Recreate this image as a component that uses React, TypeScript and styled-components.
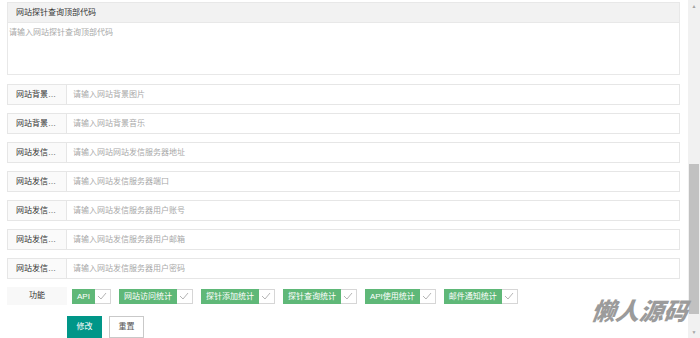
import React from 'react';
import styled, { createGlobalStyle } from 'styled-components';

const GlobalStyle = createGlobalStyle`
  html, body {
    margin: 0;
    padding: 0;
    background: #fff;
  }
  body {
    font-family: "Liberation Sans", "Noto Sans CJK SC", sans-serif;
    font-size: 8px;
    color: #333;
  }
`;

const fields = [
  { label: '网站背景图片', placeholder: '请输入网站背景图片' },
  { label: '网站背景音乐', placeholder: '请输入网站背景音乐' },
  { label: '网站发信服务器地址', placeholder: '请输入网站网站发信服务器地址' },
  { label: '网站发信服务器端口', placeholder: '请输入网站发信服务器端口' },
  { label: '网站发信服务器用户账号', placeholder: '请输入网站发信服务器用户账号' },
  { label: '网站发信服务器用户邮箱', placeholder: '请输入网站发信服务器用户邮箱' },
  { label: '网站发信服务器用户密码', placeholder: '请输入网站发信服务器用户密码' },
];

const features = ['API', '网站访问统计', '探针添加统计', '探针查询统计', 'API使用统计', '邮件通知统计'];

export default function App() {
  return (
    <>
      <GlobalStyle />
      <Page>
        <Main>
          <Card>
            <CardHeader>网站探针查询顶部代码</CardHeader>
            <CardBody>
              <Placeholder>请输入网站探针查询顶部代码</Placeholder>
            </CardBody>
          </Card>

          <FieldList>
            {fields.map((f, i) => (
              <FieldRow key={i}>
                <FieldLabel>{f.label}</FieldLabel>
                <FieldInput>{f.placeholder}</FieldInput>
              </FieldRow>
            ))}

            <FeatureRow>
              <FeatureLabel>功能</FeatureLabel>
              <Checks>
                {features.map((name) => (
                  <CheckItem key={name}>
                    <CheckText>{name}</CheckText>
                    <CheckBox>
                      <svg width="10" height="8" viewBox="0 0 10 8">
                        <polyline points="1,4 4,7 9,1" fill="none" stroke="#b5b5b5" strokeWidth="1" />
                      </svg>
                    </CheckBox>
                  </CheckItem>
                ))}
              </Checks>
            </FeatureRow>
          </FieldList>

          <Actions>
            <Button $primary>修改</Button>
            <Button>重置</Button>
          </Actions>
        </Main>

        <ScrollTrack>
          <ArrowUp>▲</ArrowUp>
          <ScrollSpace>
            <ScrollThumb />
          </ScrollSpace>
          <ArrowDown>▼</ArrowDown>
        </ScrollTrack>

        <Watermark>懒人源码</Watermark>
      </Page>
    </>
  );
}

const Page = styled.div`
  position: relative;
  display: flex;
  width: 700px;
  height: 338px;
  overflow: hidden;
`;

const Main = styled.div`
  width: 673px;
  margin-left: 7px;
  padding-top: 2px;
  display: flex;
  flex-direction: column;
`;

const Card = styled.div`
  border: 1px solid #e8e8e8;
  height: 72px;
  display: flex;
  flex-direction: column;
`;

const CardHeader = styled.div`
  height: 19px;
  line-height: 19px;
  padding-left: 8px;
  background: #f2f2f2;
  border-bottom: 1px solid #e8e8e8;
  color: #333;
`;

const CardBody = styled.div`
  flex: 1;
  padding: 3px 0 0 1px;
`;

const Placeholder = styled.span`
  color: #a8a8a8;
`;

const FieldList = styled.div`
  margin-top: 9px;
  display: flex;
  flex-direction: column;
  gap: 8px;
`;

const FieldRow = styled.div`
  display: flex;
  height: 21px;
`;

const FieldLabel = styled.div`
  width: 60px;
  box-sizing: border-box;
  padding: 0 8px;
  line-height: 19px;
  background: #fafafa;
  border: 1px solid #e6e6e6;
  color: #333;
  white-space: nowrap;
  overflow: hidden;
  text-overflow: ellipsis;
`;

const FieldInput = styled.div`
  flex: 1;
  padding-left: 6px;
  line-height: 19px;
  border: 1px solid #e6e6e6;
  border-left: none;
  color: #a8a8a8;
`;

const FeatureRow = styled.div`
  display: flex;
  align-items: center;
  height: 18px;
`;

const FeatureLabel = styled.div`
  width: 60px;
  height: 18px;
  line-height: 18px;
  text-align: center;
  background: #f8f8f8;
  color: #333;
`;

const Checks = styled.div`
  display: flex;
  gap: 8px;
  margin-left: 5px;
`;

const CheckItem = styled.div`
  display: flex;
  height: 15px;
`;

const CheckText = styled.div`
  padding: 0 5px;
  line-height: 15px;
  background: #5fb878;
  color: #fff;
  white-space: nowrap;
`;

const CheckBox = styled.div`
  width: 16px;
  box-sizing: border-box;
  border: 1px solid #d6d6d6;
  border-left: none;
  display: flex;
  align-items: center;
  justify-content: center;
  background: #fff;
`;

const Actions = styled.div`
  display: flex;
  gap: 7px;
  margin-top: 11px;
  margin-left: 60px;
`;

const Button = styled.div<{ $primary?: boolean }>`
  width: 35px;
  height: 22px;
  box-sizing: border-box;
  line-height: 20px;
  text-align: center;
  background: ${(p) => (p.$primary ? '#009688' : '#fff')};
  border: 1px solid ${(p) => (p.$primary ? '#009688' : '#c9c9c9')};
  color: ${(p) => (p.$primary ? '#fff' : '#555')};
`;

const ScrollTrack = styled.div`
  margin-left: auto;
  width: 12px;
  background: #f1f1f1;
  display: flex;
  flex-direction: column;
  align-items: center;
`;

const ArrowUp = styled.div`
  height: 12px;
  font-size: 5px;
  line-height: 12px;
  color: #a3a3a3;
`;

const ArrowDown = styled(ArrowUp)``;

const ScrollSpace = styled.div`
  flex: 1;
  width: 100%;
  display: flex;
  flex-direction: column;
  justify-content: flex-end;
  padding-bottom: 12px;
`;

const ScrollThumb = styled.div`
  height: 150px;
  margin: 0 1px;
  background: #c1c1c1;
`;

const Watermark = styled.div`
  position: absolute;
  left: 592px;
  top: 292px;
  font-family: "Noto Sans CJK SC", sans-serif;
  font-size: 24px;
  font-weight: 900;
  font-style: italic;
  color: #9b9b9b;
  transform: skewX(-8deg);
`;
